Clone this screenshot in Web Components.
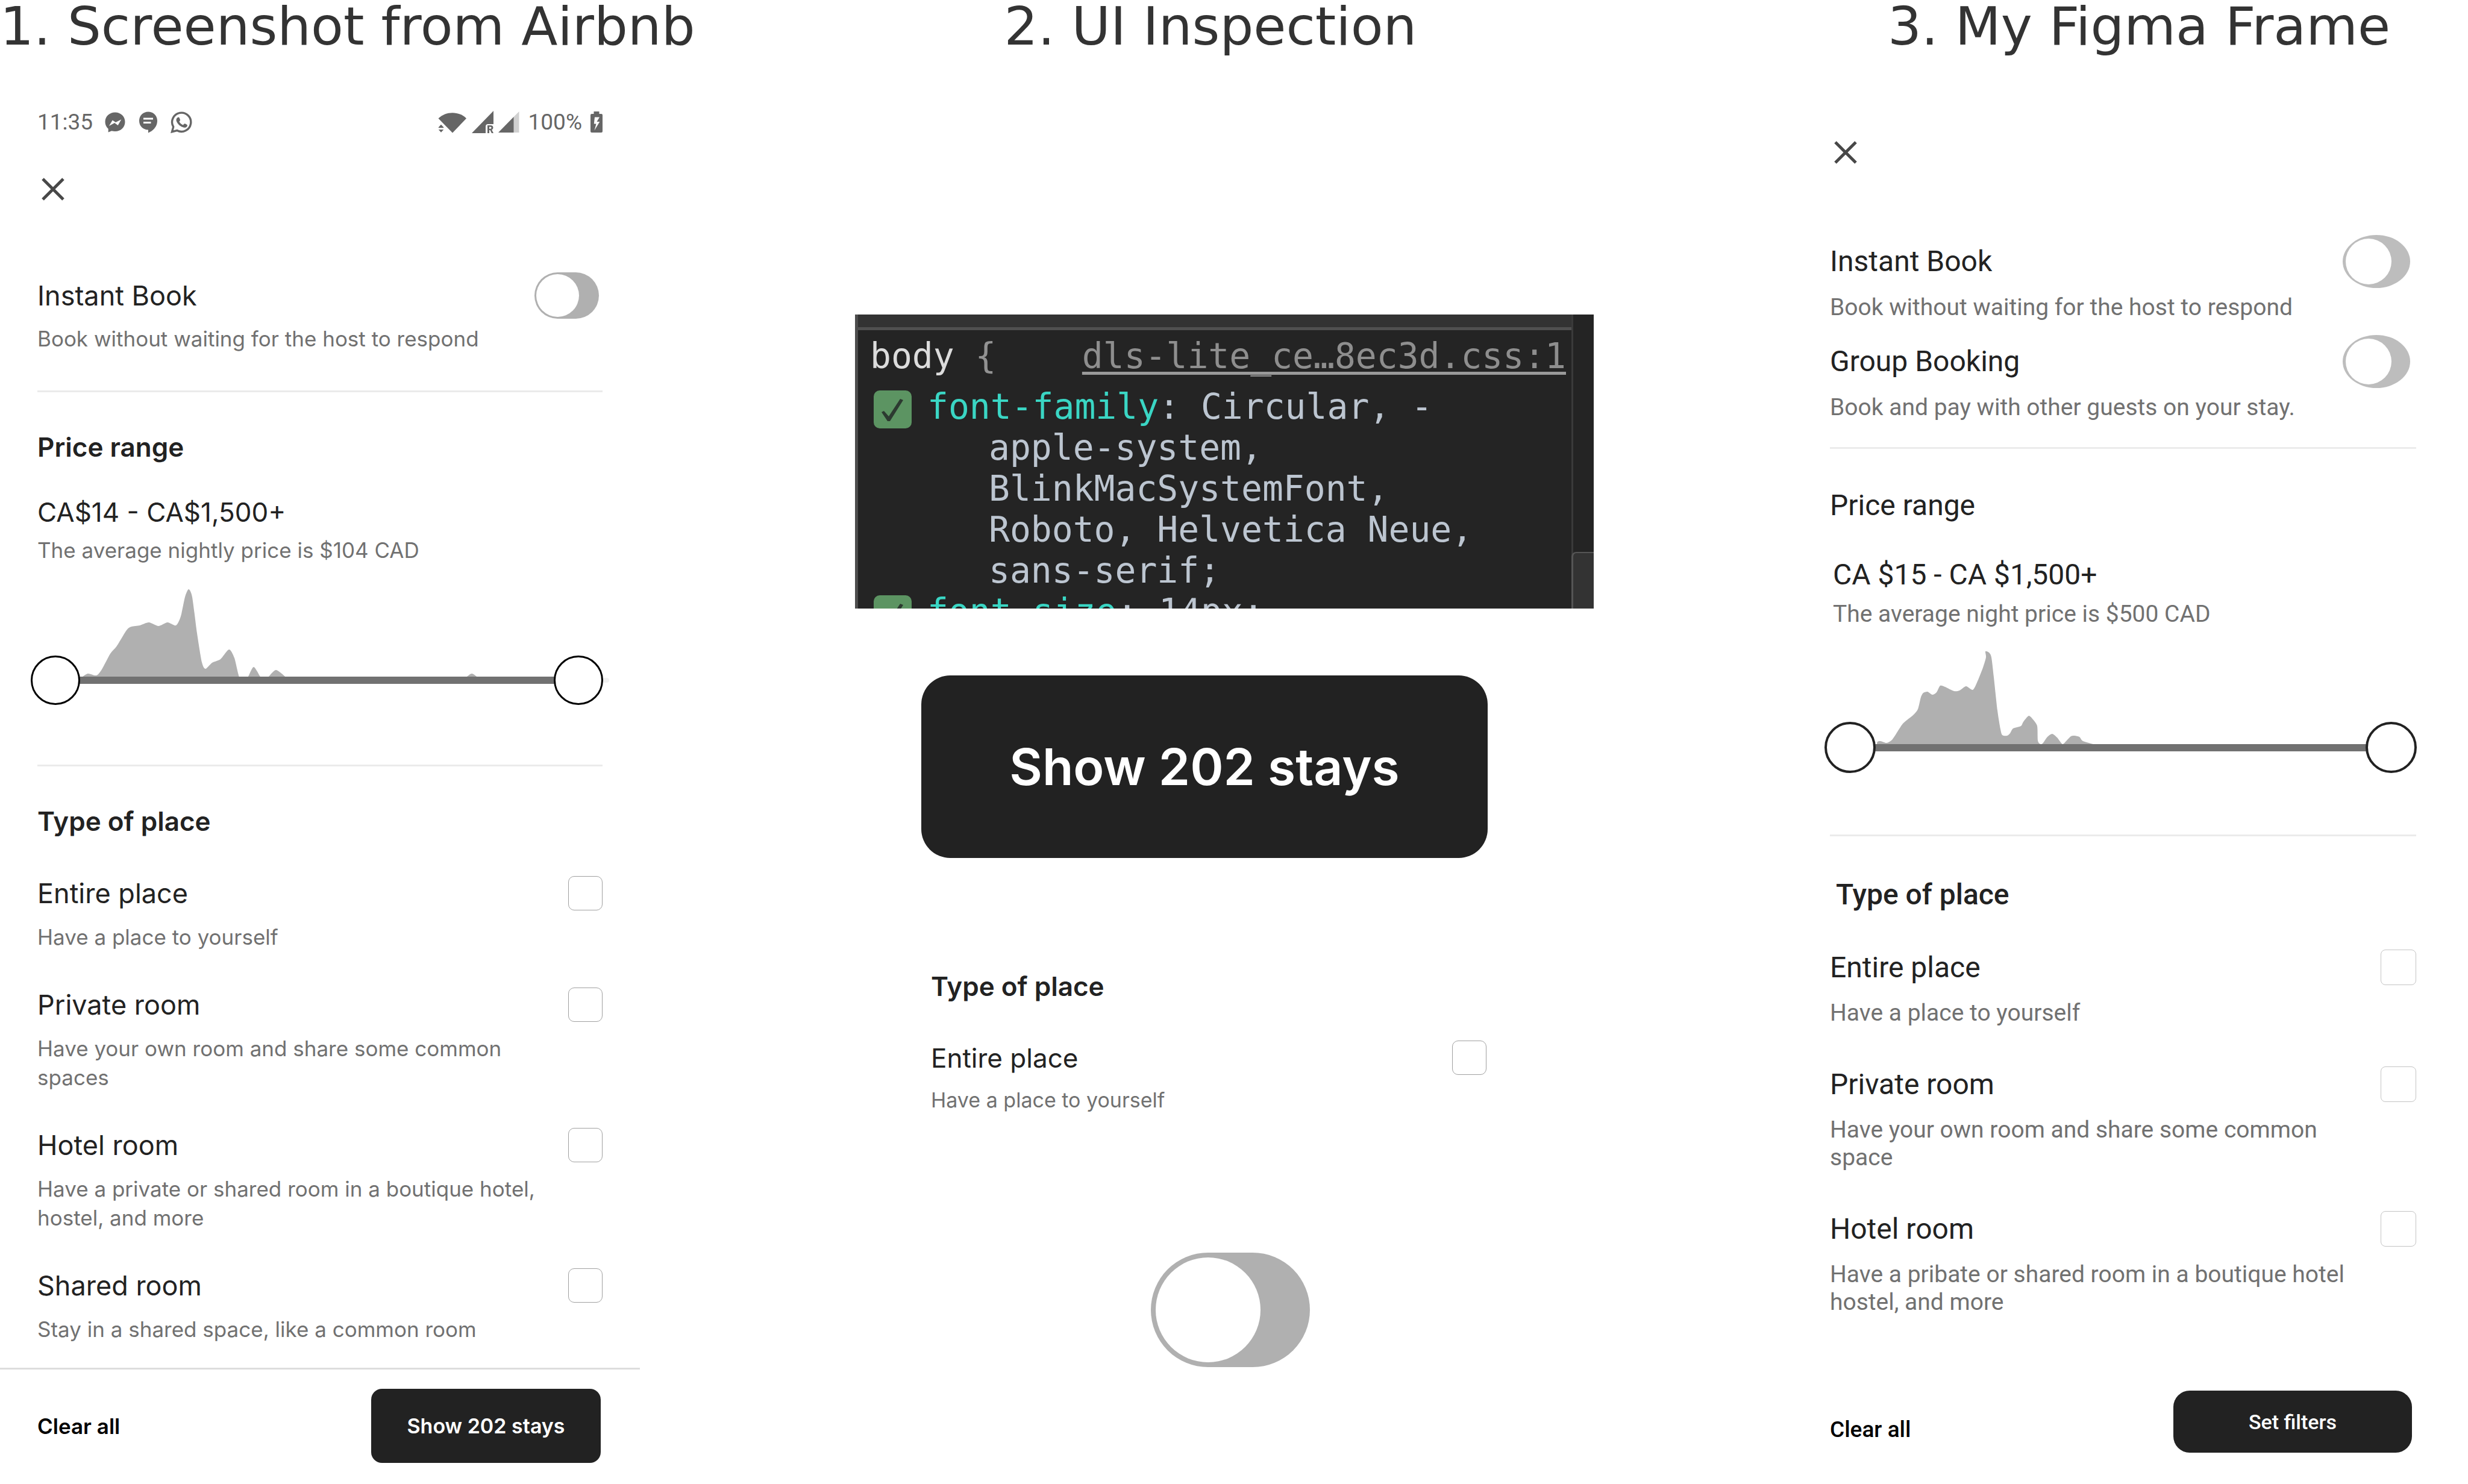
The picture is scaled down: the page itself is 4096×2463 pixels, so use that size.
<!DOCTYPE html>
<html lang="en">
<head>
<meta charset="utf-8">
<meta name="viewport" content="width=device-width">
<title>Filter screen study</title>
<style>
  html, body { margin: 0; background: #fff; }
  body { color: #222; font-family: "DejaVu Sans", sans-serif; }
  .board {
    display: grid;
    grid-template-columns: 1150fr 1272fr 1228fr;
    column-gap: 223px;
    align-items: start;
  }

  .cereal {
    font-family: Inter, sans-serif;
    --heading-size: 44px; --heading-line: 54px; --heading-weight: 600;
    --label-size: 45px; --label-line: 54px;
    --note-size: 35px; --note-line: 48px;
    --box: 57px; --box-border: #a0a0a0; --box-radius: 10px;
    --option-gap: 20px; --option-space: 60px;
    --knob-thumb: 82px; --knob-border: 3px; --knob-color: #000;
    --range-height: 192px;
  }
  .roboto {
    font-family: Roboto, sans-serif;
    --heading-size: 48px; --heading-line: 56px; --heading-weight: 500;
    --label-size: 48px; --label-line: 56px;
    --note-size: 39px; --note-line: 46px;
    --box: 59px; --box-border: #c4c4c4; --box-radius: 8px;
    --option-gap: 23px; --option-space: 66px;
    --switch-w: 112px; --switch-h: 88px; --switch-knob: 76px; --switch-inset: 5px;
    --switch-radius: 50%; --switch-color: #bdbdbd;
    --knob-thumb: 85px; --knob-border: 4px; --knob-color: #222;
    --range-height: 202px;
  }

  .phone { display: block; margin-right: 88px; }
  .phone .body { padding: 93px 62px 0; }
  .phone close-button { margin: 62px 0 111px; }
  .phone .booking { --after: 62px; --switch-end: 6px; }
  .phone .price { --before: 64px; --after: 99px; --heading-gap: 54px; --range-gap: 41px; --price-size: 44px; --price-gap: 12px; --range-outset: 0 -1px 0 -11px; --rail-over: 10px; }
  .phone .types { --before: 64px; --after: 40px; --heading-gap: 64px; --section-line: 0; }
  .phone panel-footer { --footer-line: 3px; --footer-pad: 32px 65px 0 62px; }

  .sample-button { --w: 940px; --h: 303px; --radius: 48px; --size: 84px; margin: 111px 0 186px 156px; }
  .sample-option { padding: 0 178px 0 172px; --label-size: 44px; --note-size: 34px; --option-gap: 18px; }
  .sample-option filter-section { --heading-gap: 63px; --section-line: 0; }
  .sample-switch {
    margin: 229px 0 0 537px;
    --switch-w: 264px; --switch-h: 190px; --switch-knob: 174px; --switch-inset: 8px;
  }

  .frame .body { padding: 138px 86px 0 169px; }
  .frame close-button { margin-bottom: 110px; }
  .frame .booking { --after: 43px; --option-space: 23px; --switch-end: 10px; }
  .frame .price { --before: 66px; --after: 102px; --heading-gap: 59px; --heading-weight: 400; --range-gap: 39px; --price-size: 48px; --price-gap: 14px; --price-inset: 5px; --range-outset: 0 -1px 0 -9px; }
  .frame .types { --before: 69px; --after: 124px; --heading-gap: 63px; --section-line: 0; --heading-inset: 10px; }
  .frame panel-footer { --footer-pad: 0 7px 0 0; --footer-drop: 26px; }

  .booking { --option-gap: 9px; }
  .phone action-button { --w: 381px; --h: 123px; --radius: 18px; --size: 34px; }
  .frame action-button { --w: 396px; --h: 103px; --radius: 27px; --size: 34px; }
  .phone text-button { --size: 35px; --line: 48px; --weight: 600; }
  .frame text-button { --size: 37px; --line: 46px; --weight: 500; }
</style>
</head>
<body>
<main class="board">
  <board-column heading="1. Screenshot from Airbnb">
    <div class="phone cereal">
      <div class="body">
        <status-bar></status-bar>
        <close-button></close-button>
        <filter-section class="booking">
          <filter-option kind="switch"><span slot="label">Instant Book</span><span slot="note">Book without waiting for the host to respond</span></filter-option>
        </filter-section>
        <filter-section class="price" heading="Price range">
          <price-range curve="85,146 95,140 109,143 118,133 132,107 143,94 159,68 167,62 181,60 196,55 212,61 227,55 241,60 249,45 256,13 262,0 268,13 276,73 284,121 290,132 301,122 315,116 329,100 338,114 347,148 359,148 370,129 383,148 392,148 407,134 426,148 430,148 716,148 720,148 732,140 744,148">
            <span slot="price">CA$14 - CA$1,500+</span><span slot="note">The average nightly price is $104 CAD</span>
          </price-range>
        </filter-section>
        <filter-section class="types" heading="Type of place">
          <filter-option><span slot="label">Entire place</span><span slot="note">Have a place to yourself</span></filter-option>
          <filter-option><span slot="label">Private room</span><span slot="note">Have your own room and share some common spaces</span></filter-option>
          <filter-option><span slot="label">Hotel room</span><span slot="note">Have a private or shared room in a boutique hotel, hostel, and more</span></filter-option>
          <filter-option><span slot="label">Shared room</span><span slot="note">Stay in a shared space, like a common room</span></filter-option>
        </filter-section>
      </div>
      <panel-footer>
        <text-button>Clear all</text-button>
        <action-button>Show 202 stays</action-button>
      </panel-footer>
    </div>
  </board-column>

  <board-column heading="2. UI Inspection" centered>
    <style-inspector></style-inspector>
    <div class="cereal">
      <action-button class="sample-button">Show 202 stays</action-button>
      <div class="sample-option">
        <filter-section heading="Type of place">
          <filter-option><span slot="label">Entire place</span><span slot="note">Have a place to yourself</span></filter-option>
        </filter-section>
      </div>
      <toggle-switch class="sample-switch"></toggle-switch>
    </div>
  </board-column>

  <board-column heading="3. My Figma Frame" centered style="--title-start: 136px">
    <div class="frame roboto">
      <div class="body">
        <close-button></close-button>
        <filter-section class="booking">
          <filter-option kind="switch"><span slot="label">Instant Book</span><span slot="note">Book without waiting for the host to respond</span></filter-option>
          <filter-option kind="switch"><span slot="label">Group Booking</span><span slot="note">Book and pay with other guests on your stay.</span></filter-option>
        </filter-section>
        <filter-section class="price" heading="Price range">
          <price-range curve="87,154 88,150 93,149 103,152 112,147 122,132 131,119 147,106 155,96 160,76 164,69 171,67 179,72 186,68 192,57 200,59 215,66 224,65 235,58 246,64 253,52 263,27 268,10 267,0 273,2 277,10 281,43 287,98 292,129 295,139 303,140 308,136 313,128 326,124 330,117 339,107 346,113 353,124 354,148 358,154 362,153 370,142 378,137 386,143 395,154 402,148 409,141 415,140 423,142 429,149 446,154">
            <span slot="price">CA $15 - CA $1,500+</span><span slot="note">The average night price is $500 CAD</span>
          </price-range>
        </filter-section>
        <filter-section class="types" heading="Type of place">
          <filter-option><span slot="label">Entire place</span><span slot="note">Have a place to yourself</span></filter-option>
          <filter-option><span slot="label">Private room</span><span slot="note">Have your own room and share some common space</span></filter-option>
          <filter-option><span slot="label">Hotel room</span><span slot="note">Have a pribate or shared room in a boutique hotel hostel, and more</span></filter-option>
        </filter-section>
        <panel-footer>
          <text-button>Clear all</text-button>
          <action-button>Set filters</action-button>
        </panel-footer>
      </div>
    </div>
  </board-column>
</main>

<script>
// Registers an element whose open shadow root is cloned from the given markup.
function define(name, markup, setup) {
  const template = document.createElement('template');
  template.innerHTML = markup;
  customElements.define(name, class extends HTMLElement {
    constructor() {
      super();
      this.attachShadow({ mode: 'open' }).append(template.content.cloneNode(true));
    }
    connectedCallback() { if (setup) setup(this, this.shadowRoot); }
  });
}

const switchCss = `
  .switch {
    appearance: none; box-sizing: border-box; margin: 0; flex: none;
    width: var(--switch-w, 107px); height: var(--switch-h, 77px);
    padding-left: var(--switch-inset, 3px);
    border-radius: var(--switch-radius, 999px);
    background: var(--switch-color, #b0b0b0);
    display: flex; align-items: center; cursor: pointer;
  }
  .switch::before {
    content: ""; width: var(--switch-knob, 71px); height: var(--switch-knob, 71px);
    border-radius: 50%; background: #fff;
  }`;

define('board-column', `
  <style>
    :host { display: block; min-width: 0; }
    h1 { margin: 0; padding: 0 0 0 var(--title-start, 0); font-size: 88px; line-height: 88px; font-weight: 400; color: #333; white-space: nowrap; }
    :host([centered]) h1 { text-align: center; }
  </style>
  <h1></h1><slot></slot>`,
  (host, root) => { root.querySelector('h1').textContent = host.getAttribute('heading'); });

define('status-bar', `
  <style>
    :host { display: flex; justify-content: space-between; align-items: center; height: 44px; color: #666; font: 37px/44px Roboto, sans-serif; }
    div { display: flex; align-items: center; }
    .apps { gap: 19px; }
    .system { gap: 8px; }
    .system span { margin: 0 6px; }
    svg { display: block; fill: currentColor; }
  </style>
  <div class="apps">
    <span>11:35</span>
    <svg width="36" height="36" viewBox="0 0 36 36"><path fill-rule="evenodd" d="M18 1.500C8.500 1.500 1.500 8.300 1.500 17.300c0 4.700 2 8.700 5.200 11.500V34.500l5.600-2.200c1.800.5 3.700.8 5.700.8 9.500 0 16.500-6.800 16.500-15.800S27.500 1.500 18 1.500ZM8 24l5.700-9.600 5.300 3.700 9.300-4.900-5.600 9.900-5.500-4.100Z"/></svg>
    <svg width="36" height="36" viewBox="0 0 36 36"><path fill-rule="evenodd" d="M18 .5C9.500.5 3 7 3 15.500S9.500 30.500 18 30.500V35.500C27.500 31.500 33 24 33 15.500 33 7 26.500.5 18 .5ZM10 10.500h16v3H10ZM10 17h12.500v3H10Z"/></svg>
    <svg width="36" height="36" viewBox="0 0 36 36"><path fill="none" stroke="currentColor" stroke-width="3.400" d="M2.500 33.700 4.700 25.600A15.600 15.600 0 1 1 10.800 31.500Z"/><path d="M11.500 10.200c1-.9 2.600-.8 3.200.4l1.200 2.900c.3.700.1 1.300-.4 1.900l-1 1.300c1.400 2.700 3.600 4.700 6.400 5.800l1.500-1.800c.5-.6 1.100-.7 1.800-.4l2.800 1.400c1 .5 1.100 1.300.8 2.300-.7 2.300-3.200 3.200-5.300 2.700C16.500 25.500 11.300 20.800 9.700 15.500c-.6-2 .1-4 1.800-5.300Z"/></svg>
  </div>
  <div class="system">
    <svg width="48" height="36" viewBox="0 0 48 36"><path d="M.5 11.500C13-1 35-1 47 11.500L24 35.500Z"/><path d="M.8 26.300 5 21.800l4.300 4.500v1H.8ZM.8 30h8.500L5 34.800Z"/></svg>
    <svg width="36" height="38" viewBox="0 0 36 38"><path d="M0 37 36 0V22H27q-4 0-4 4V37Z"/><path fill-rule="evenodd" d="M26 24h5q4.500 0 4.500 4 0 2.700-2.300 3.600L36 37h-3l-2.500-5H29v5h-3ZM29 26.500v3.200h1.800q1.800 0 1.800-1.600t-1.800-1.600Z"/></svg>
    <svg width="36" height="36" viewBox="0 0 36 36"><path fill="#d0d0d0" d="M25 9.500 34.500 0V35H25Z"/><path d="M0 35 25.500 9V35Z"/></svg>
    <span>100%</span>
    <svg width="20" height="36" viewBox="0 0 20 36"><path fill-rule="evenodd" d="M5.500 0h9v4H18q2 0 2 2V33q0 2-2 2H2q-2 0-2-2V6q0-2 2-2h3.500ZM7 9.500 5.800 20.500H9.500L6.500 31.500 15.300 17H10.500L15 9.500Z"/></svg>
  </div>`);

define('close-button', `
  <style>
    :host { display: flex; }
    button { width: 52px; height: 54px; padding: 0; border: 0; background: none; display: grid; place-items: center; cursor: pointer; }
    svg { display: block; stroke: #484848; stroke-width: 5; }
  </style>
  <button type="button" aria-label="Close"><svg width="38" height="38" viewBox="0 0 38 38"><path d="M2 2 36 36M36 2 2 36"/></svg></button>`);

define('filter-section', `
  <style>
    :host { display: block; padding: var(--before, 0) 0 var(--after, 0); border-bottom: var(--section-line, 3px) solid #ebebeb; }
    .items { display: grid; row-gap: var(--option-space); }
    h2 { margin: 0 0 var(--heading-gap); padding-left: var(--heading-inset, 0); font-size: var(--heading-size); line-height: var(--heading-line); font-weight: var(--heading-weight); }
    h2:empty { display: none; }
  </style>
  <h2></h2><div class="items"><slot></slot></div>`,
  (host, root) => { root.querySelector('h2').textContent = host.getAttribute('heading') || ''; });

define('filter-option', `
  <style>
    :host { display: grid; grid-template-columns: 1fr auto; gap: var(--option-gap) 24px; align-items: center; }
    :host([kind="switch"]) { padding-right: var(--switch-end, 0); }
    label { font-size: var(--label-size); line-height: var(--label-line); }
    p { grid-column: 1; margin: 0; font-size: var(--note-size); line-height: var(--note-line); color: #717171; }
    .box {
      appearance: none; box-sizing: border-box; margin: 0; width: var(--box); height: var(--box);
      border: 1px solid var(--box-border); border-radius: var(--box-radius); background: #fff; cursor: pointer;
    }
    ${switchCss}
  </style>
  <label for="choice"><slot name="label"></slot></label>
  <input type="checkbox" id="choice" aria-describedby="note">
  <p id="note"><slot name="note"></slot></p>`,
  (host, root) => {
    const input = root.querySelector('input');
    input.className = host.getAttribute('kind') === 'switch' ? 'switch' : 'box';
  });

define('toggle-switch', `
  <style>:host { display: flex; } ${switchCss}</style>
  <input type="checkbox" class="switch" aria-label="Toggle">`);

// Smooth curve through every point of a distribution, closed on its base line.
function smoothPath(list, base) {
  const pts = list.trim().split(/\s+/).map(p => p.split(',').map(Number));
  let d = 'M' + pts[0].join(' ');
  for (let i = 0; i < pts.length - 1; i++) {
    const a = pts[i - 1] || pts[i], b = pts[i], c = pts[i + 1], e = pts[i + 2] || c;
    // Flat stretches stay straight, so that a long neighbour does not bend the hills beside them.
    if (b[1] === c[1]) { d += 'L' + c.join(' '); continue; }
    d += 'C' + [b[0] + (c[0] - a[0]) / 8, b[1] + (c[1] - a[1]) / 8, c[0] - (e[0] - b[0]) / 8, c[1] - (e[1] - b[1]) / 8, c[0], c[1]].join(' ');
  }
  return d + 'V' + base + 'H' + pts[0][0] + 'Z';
}

define('price-range', `
  <style>
    :host { display: block; }
    .text { display: grid; row-gap: var(--price-gap); padding-left: var(--price-inset, 0); margin-bottom: var(--range-gap); }
    .price { font-size: var(--price-size); line-height: var(--label-line); }
    .note { font-size: var(--note-size); line-height: var(--note-line); color: #717171; }
    .range { display: grid; height: var(--range-height); margin: var(--range-outset); align-items: end; --mid: calc(var(--knob-thumb) / 2); }
    .range > * { grid-area: 1 / 1; min-width: 0; }
    svg { display: block; width: 100%; height: var(--range-height); fill: #b0b0b0; }
    .rail { height: 8px; margin: 0 calc(0px - var(--rail-over, 0px)) calc(var(--mid) - 4px) 20px; background: #f0f0f0; border-radius: 4px; }
    .track { height: 12px; margin: 0 20px calc(var(--mid) - 6px); background: #717171; }
    input { appearance: none; width: 100%; height: var(--knob-thumb); margin: 0; background: none; pointer-events: none; }
    input::-webkit-slider-thumb {
      appearance: none; box-sizing: border-box; width: var(--knob-thumb); height: var(--knob-thumb);
      border: var(--knob-border) solid var(--knob-color); border-radius: 50%; background: #fff; pointer-events: auto;
    }
  </style>
  <div class="text">
    <div class="price"><slot name="price"></slot></div>
    <div class="note"><slot name="note"></slot></div>
  </div>
  <div class="range">
    <svg preserveAspectRatio="none"><path/></svg>
    <div class="rail"></div>
    <div class="track"></div>
    <input type="range" min="0" max="100" value="0" aria-label="Minimum price">
    <input type="range" min="0" max="100" value="100" aria-label="Maximum price">
  </div>`,
  (host, root) => {
    const tall = host.closest('.roboto');
    root.querySelector('svg').setAttribute('viewBox', tall ? '0 0 983 202' : '0 0 950 192');
    root.querySelector('path').setAttribute('d', smoothPath(host.getAttribute('curve'), tall ? 158 : 150));
  });

define('panel-footer', `
  <style>
    :host { display: flex; justify-content: space-between; align-items: center; border-top: var(--footer-line, 0) solid #ddd; padding: var(--footer-pad); }
    ::slotted(text-button) { padding-top: var(--footer-drop, 0); }
  </style><slot></slot>`);

define('text-button', `
  <style>
    :host { display: flex; }
    button { font: inherit; font-size: var(--size); line-height: var(--line); font-weight: var(--weight); color: #000; border: 0; padding: 0; background: none; cursor: pointer; }
  </style><button type="button"><slot></slot></button>`);

define('action-button', `
  <style>
    :host { display: flex; }
    button {
      width: var(--w); height: var(--h); padding: 0; border: 0; border-radius: var(--radius);
      font: inherit; font-size: var(--size); font-weight: var(--heading-weight); color: #fff; background: #222; cursor: pointer;
    }
  </style><button type="button"><slot></slot></button>`);

define('style-inspector', `
  <style>
    :host {
      display: flex; height: 488px; margin: 434px 0 0 46px; overflow: hidden; box-sizing: border-box;
      border-left: 5px solid #4d4d4d; background: #242424; color: #bcc5d0;
      font: 58px/68px "DejaVu Sans Mono", monospace; white-space: nowrap;
    }
    .rules { flex: 1; min-width: 0; }
    .edge { height: 21px; background: #333; border-bottom: 5px solid #505050; }
    .selector { display: flex; justify-content: space-between; padding: 9px 9px 16px 20px; color: #929292; }
    b { font-weight: 400; color: #dcdcdc; }
    a { color: #8e8e8e; text-decoration: underline 5px #9a9a9a; text-underline-offset: 6px; text-decoration-skip-ink: none; }
    .rule { display: flex; gap: 26px; padding-left: 26px; }
    .rule label { padding-left: 102px; text-indent: -102px; }
    i { font-style: normal; color: #3ad6c4; }
    input { appearance: none; flex: none; width: 63px; height: 63px; margin: 7px 0 0; border-radius: 10px; background: #5c9462; }
    input:checked::before {
      content: ""; display: block; width: 63px; height: 63px; background: #2c3a30;
      clip-path: polygon(13px 36px, 17px 34px, 25px 43px, 44px 14px, 49px 16px, 27px 51px, 23px 51px);
    }
    .scroll { width: 37px; box-sizing: border-box; border-left: 3px solid #3a3a3a; display: flex; flex-direction: column; justify-content: flex-end; }
    .thumb { height: 94px; box-sizing: border-box; margin-left: -3px; background: #333; border: solid #555; border-width: 2px 0 0 3px; border-radius: 8px 0 0 0; }
  </style>
  <div class="rules">
    <div class="edge"></div>
    <div class="selector"><span><b>body</b> {</span><a href="#">dls-lite_ce…8ec3d.css:1</a></div>
    <div class="rule"><input type="checkbox" id="family" checked><label for="family"><i>font-family</i>: Circular, -<br>apple-system,<br>BlinkMacSystemFont,<br>Roboto, Helvetica Neue,<br>sans-serif;</label></div>
    <div class="rule"><input type="checkbox" id="size" checked><label for="size"><i>font-size</i>: 14px;</label></div>
  </div>
  <div class="scroll"><div class="thumb"></div></div>`);
</script>
</body>
</html>
